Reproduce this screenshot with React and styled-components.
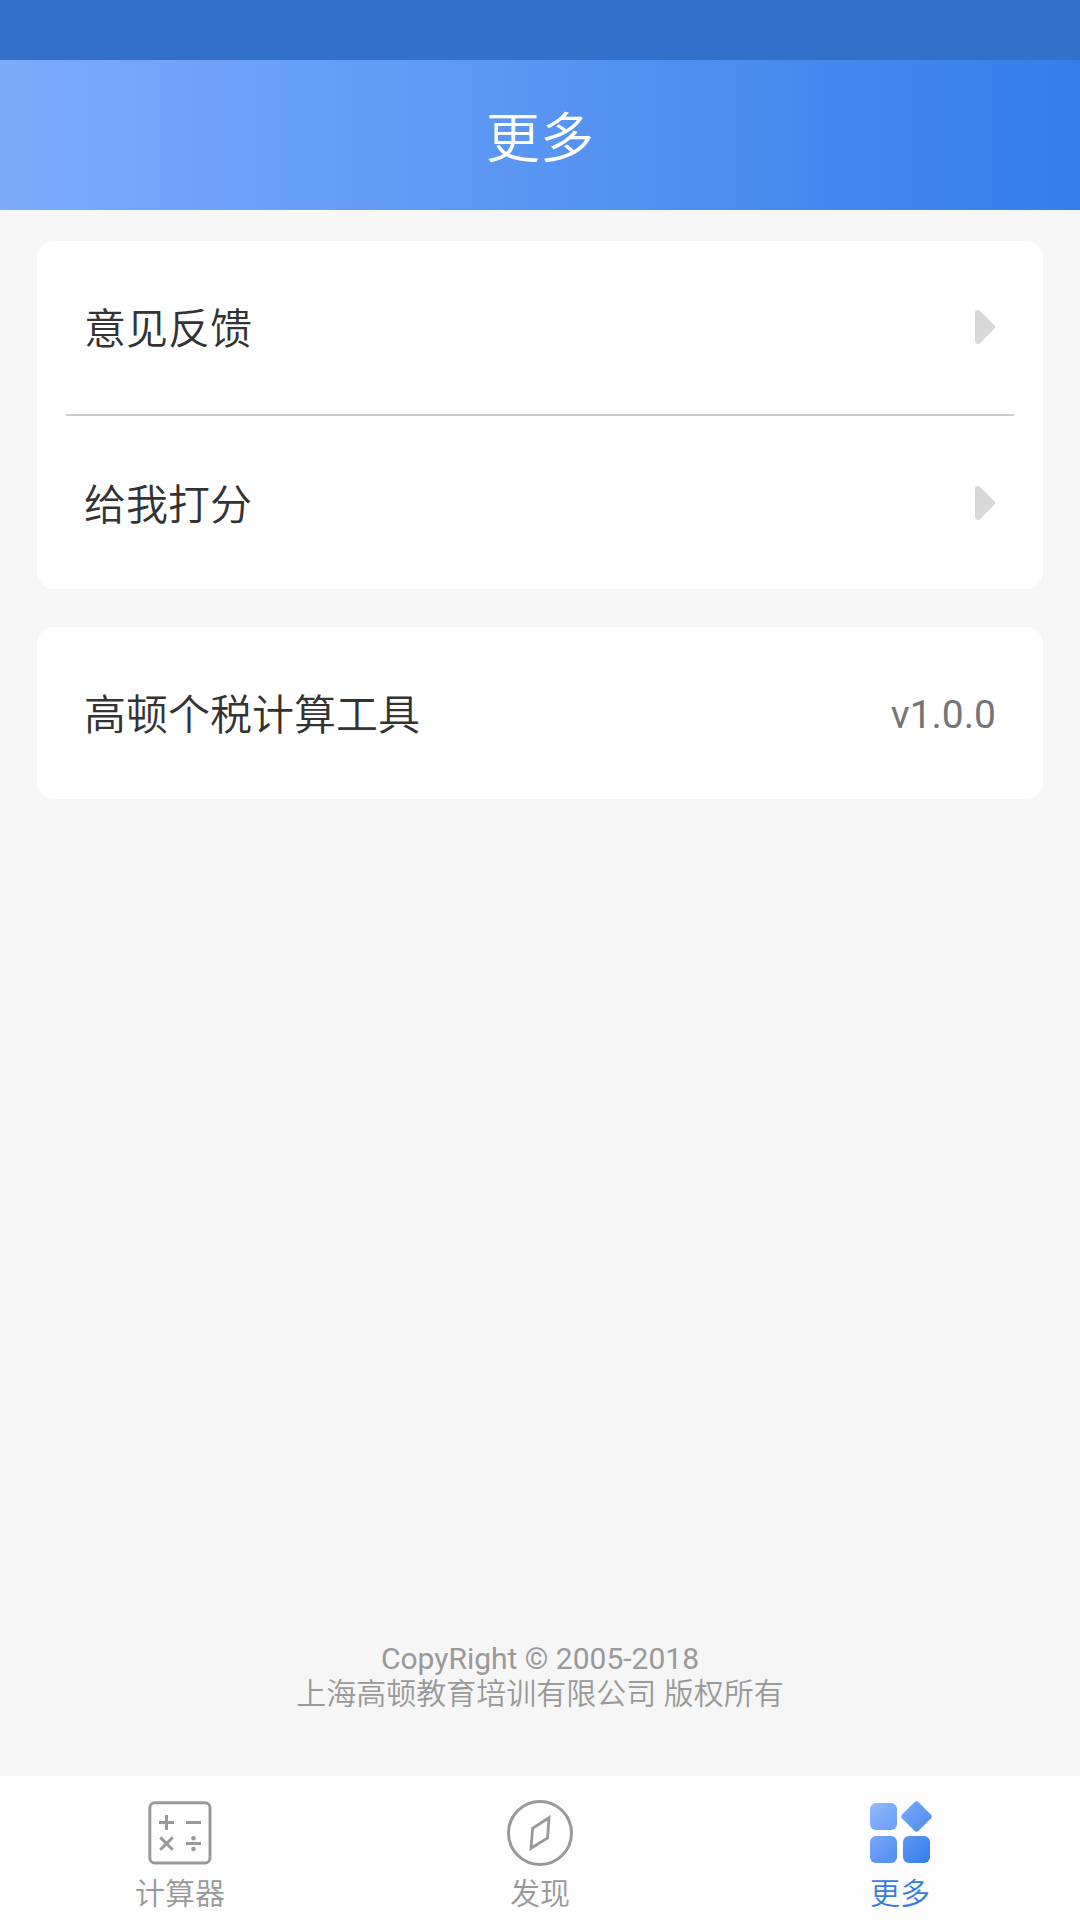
import React from "react";
import styled, { createGlobalStyle } from "styled-components";

const GlobalStyle = createGlobalStyle`
  * {
    box-sizing: border-box;
  }
  body {
    margin: 0;
    background: #f6f6f6;
    font-family: Roboto, "Noto Sans CJK SC", sans-serif;
  }
`;

const Page = styled.div`
  display: flex;
  flex-direction: column;
  width: 1080px;
  height: 1920px;
  background: #f6f6f6;
`;

const StatusBar = styled.div`
  flex: none;
  height: 60px;
  background: #3370c9;
`;

const Header = styled.header`
  flex: none;
  display: flex;
  align-items: center;
  justify-content: center;
  height: 150px;
  background: linear-gradient(
    90deg,
    #7eabf9 0%,
    #73a6f9 12%,
    #5995f2 50%,
    #347de9 100%
  );
`;

const Title = styled.h1`
  margin: 0;
  padding-top: 10px;
  color: #fff;
  font-size: 54px;
  font-weight: 350;
  line-height: 64px;
`;

const Content = styled.main`
  flex: 1;
  display: flex;
  flex-direction: column;
  gap: 38px;
  padding: 31px 37px 0;
`;

const Card = styled.section`
  padding: 0 29px;
  border-radius: 17px;
  background: #fff;
`;

const Row = styled.div`
  display: flex;
  align-items: center;
  justify-content: space-between;
  height: 172px;
  padding: 0 19px 0 18px;
`;

const Divider = styled.div`
  height: 2px;
  margin: 1px 0;
  background: #ccc;
`;

const Label = styled.span`
  padding-top: 6px;
  color: #333;
  font-size: 42px;
  font-weight: 350;
  line-height: 50px;
`;

const Version = styled.span`
  padding-top: 4px;
  margin-right: -1px;
  color: #757575;
  font-size: 39px;
  line-height: 46px;
`;

const CopyRight = styled.footer`
  margin-top: auto;
  padding-bottom: 65px;
  color: #999;
  font-size: 30px;
  line-height: 35px;
  text-align: center;
`;

const Company = styled.div`
  font-weight: 350;
`;

const TabBar = styled.nav`
  flex: none;
  display: flex;
  height: 144px;
  background: #fdfdfd;
`;

const Tab = styled.div`
  flex: 1;
  display: flex;
  flex-direction: column;
  align-items: center;
  padding-top: 24px;
  color: ${(props) => (props.$active ? "#3a7be0" : "#999")};
`;

const TabText = styled.span`
  margin-top: 10px;
  font-size: 30px;
  font-weight: 350;
  line-height: 36px;
`;

const Arrow = () => (
  <svg width="20" height="34" viewBox="0 0 20 34">
    <path
      d="M3 3L17 17L3 31Z"
      fill="#d8d8d8"
      stroke="#d8d8d8"
      strokeWidth="6"
      strokeLinejoin="round"
    />
  </svg>
);

const CalculatorIcon = () => (
  <svg width="66" height="66" viewBox="0 0 66 66" fill="none">
    <g stroke="#999" strokeWidth="3">
      <rect x="2.8" y="2.8" width="60.2" height="60.2" rx="5" />
      <path d="M12 22.5H27M19.5 15V30M39 22.5H54M39 43.6H54" />
      <path d="M13.3 37.4L25.7 49.8M25.7 37.4L13.3 49.8" />
    </g>
    <circle cx="46.5" cy="38.2" r="2.3" fill="#999" />
    <circle cx="46.5" cy="49" r="2.3" fill="#999" />
  </svg>
);

const CompassIcon = () => (
  <svg width="66" height="66" viewBox="0 0 66 66" fill="none">
    <g stroke="#999" strokeWidth="3">
      <circle cx="33" cy="33" r="31.5" />
      <path d="M42 17.7L40.6 38L24 48.3L25.6 28.3Z" strokeWidth="2.8" />
    </g>
  </svg>
);

const MoreIcon = () => (
  <svg width="66" height="66" viewBox="0 0 66 66">
    <defs>
      <linearGradient
        id="moreFill"
        gradientUnits="userSpaceOnUse"
        x1="3"
        y1="3"
        x2="63"
        y2="63"
      >
        <stop offset="0" stopColor="#92b9ff" />
        <stop offset="1" stopColor="#347ce8" />
      </linearGradient>
    </defs>
    <g fill="url(#moreFill)">
      <rect x="3" y="3" width="27" height="27" rx="6" />
      <rect x="3" y="36" width="27" height="27" rx="6" />
      <rect x="36" y="36" width="27" height="27" rx="6" />
      <path d="M47.7 1.9Q49.5 0.5 51.3 1.9L64.1 14.7Q65.5 16.5 64.1 18.3L51.3 31.1Q49.5 32.5 47.7 31.1L34.9 18.3Q33.5 16.5 34.9 14.7Z" />
    </g>
  </svg>
);

const App = () => {
  return (
    <>
      <GlobalStyle />
      <Page>
        <StatusBar />
        <Header>
          <Title>更多</Title>
        </Header>
        <Content>
          <Card>
            <Row>
              <Label>意见反馈</Label>
              <Arrow />
            </Row>
            <Divider />
            <Row>
              <Label>给我打分</Label>
              <Arrow />
            </Row>
          </Card>
          <Card>
            <Row>
              <Label>高顿个税计算工具</Label>
              <Version>v1.0.0</Version>
            </Row>
          </Card>
          <CopyRight>
            CopyRight © 2005-2018
            <Company>上海高顿教育培训有限公司 版权所有</Company>
          </CopyRight>
        </Content>
        <TabBar>
          <Tab>
            <CalculatorIcon />
            <TabText>计算器</TabText>
          </Tab>
          <Tab>
            <CompassIcon />
            <TabText>发现</TabText>
          </Tab>
          <Tab $active>
            <MoreIcon />
            <TabText>更多</TabText>
          </Tab>
        </TabBar>
      </Page>
    </>
  );
};

export default App;
